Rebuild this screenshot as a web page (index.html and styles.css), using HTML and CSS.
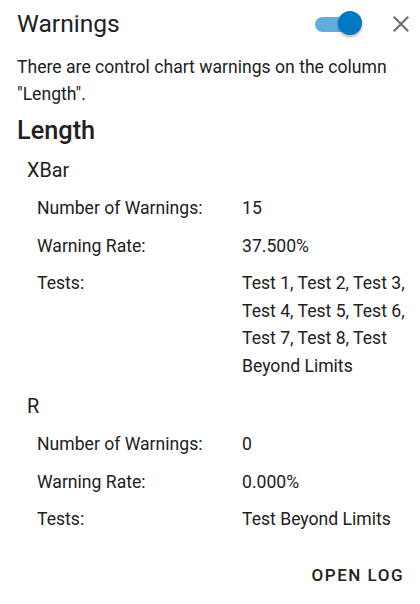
FILE: index.html
```html
<!DOCTYPE html>
<html>
<head>
<meta charset="utf-8">
<link rel="stylesheet" href="styles.css">
</head>
<body>
<div class="panel">
  <header class="head">
    <h1 class="title">Warnings</h1>
    <div class="switch"><span class="track"></span><span class="thumb"></span></div>
    <svg class="close" width="16" height="16" viewBox="0 0 16 16"><path d="M0.8 0.8L15.2 15.2M15.2 0.8L0.8 15.2" stroke="#707070" stroke-width="2.2" fill="none"/></svg>
  </header>
  <p class="desc">There are control chart warnings on the column "Length".</p>
  <h2 class="col">Length</h2>
  <section class="chart">
    <h3 class="chart-name">XBar</h3>
    <div class="rows">
      <div class="label">Number of Warnings:</div><div class="value">15</div>
      <div class="label">Warning Rate:</div><div class="value">37.500%</div>
      <div class="label">Tests:</div><div class="value">Test 1, Test 2, Test 3, Test 4, Test 5, Test 6, Test 7, Test 8, Test Beyond Limits</div>
    </div>
  </section>
  <section class="chart">
    <h3 class="chart-name">R</h3>
    <div class="rows">
      <div class="label">Number of Warnings:</div><div class="value">0</div>
      <div class="label">Warning Rate:</div><div class="value">0.000%</div>
      <div class="label">Tests:</div><div class="value">Test Beyond Limits</div>
    </div>
  </section>
  <div class="actions"><button class="btn">Open Log</button></div>
</div>
</body>
</html>
```
FILE: styles.css
```css
* { box-sizing: border-box; }
html, body { margin: 0; padding: 0; background: #fff; }
body { font-family: Roboto, "Noto Sans", sans-serif; color: #212121; width: 420px; height: 604px; overflow: hidden; }
.panel { padding: 0 11px 0 17px; }
.head { display: flex; align-items: center; height: 48px; }
.title { margin: 0; font-size: 24.6px; font-weight: 400; flex: 1; line-height: 1; }
.switch { position: relative; width: 48px; height: 24px; margin-right: 31px; }
.track { position: absolute; left: 1px; top: 5px; width: 42px; height: 15px; border-radius: 8px; background: #62acd8; }
.thumb { position: absolute; right: 0; top: -1px; width: 24px; height: 24px; border-radius: 50%; background: #0277c2; box-shadow: 0 2px 3px rgba(0,0,0,0.3); }
.close { display: block; }
.desc { margin: 6px 0 0; font-size: 17.6px; line-height: 27px; }
.col { margin: 6px 0 0; font-size: 25.3px; font-weight: 500; line-height: 34px; }
.chart { padding-left: 10px; }
.chart-name { margin: 8px 0 0; font-size: 19.8px; font-weight: 400; line-height: 30px; }
.rows { display: grid; grid-template-columns: 205px 1fr; row-gap: 10px; padding-left: 10px; margin-top: 9px; font-size: 17.6px; line-height: 27.5px; }
.chart + .chart .chart-name { margin-top: 12px; }
.actions { display: flex; justify-content: flex-end; margin-top: 31px; }
.btn { border: 0; background: none; padding: 0; font-family: Roboto, sans-serif; font-weight: 500; font-size: 17px; letter-spacing: 1.5px; text-transform: uppercase; color: #212121; margin-right: 5px; }
```
